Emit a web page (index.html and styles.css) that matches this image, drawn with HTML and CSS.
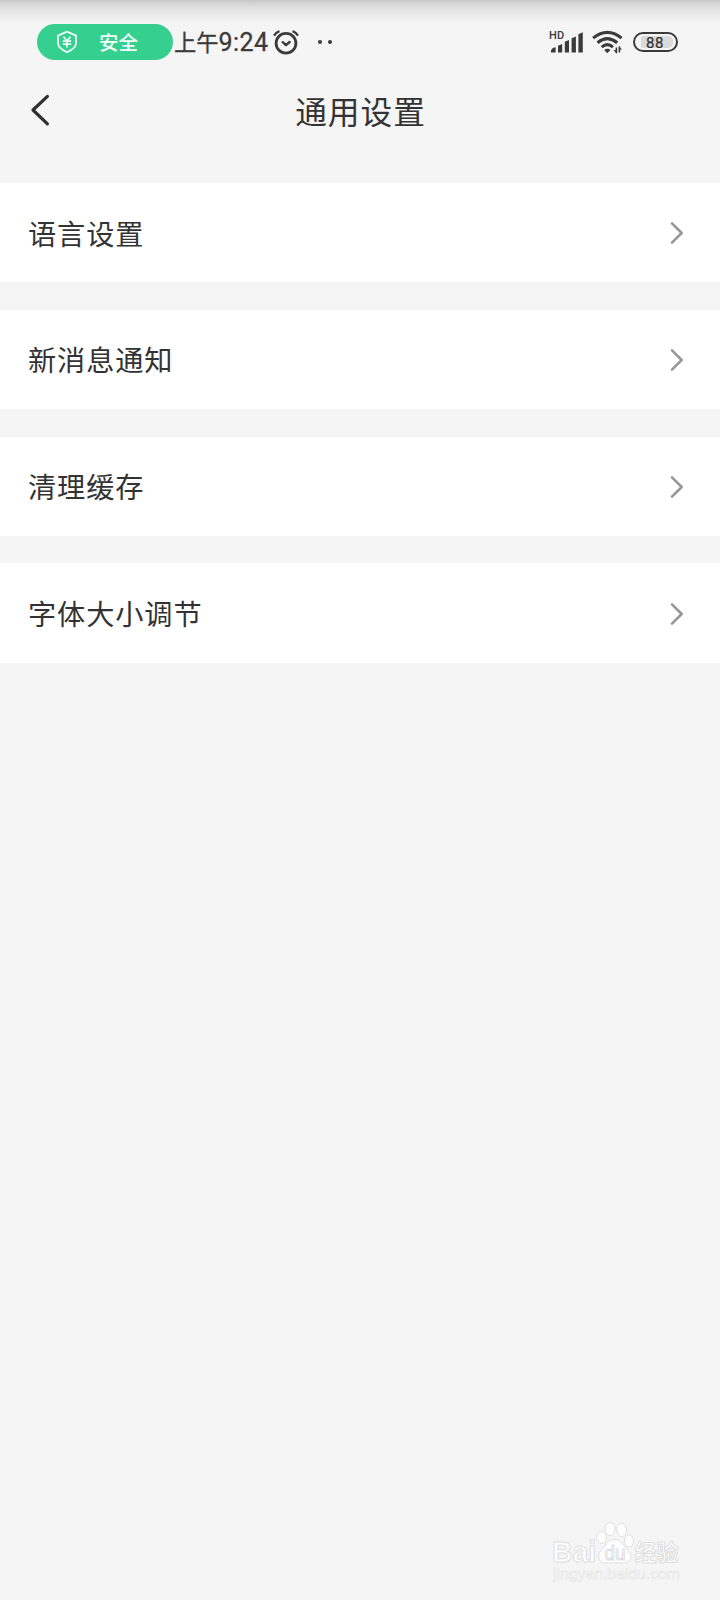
FILE: index.html
```html
<!DOCTYPE html>
<html lang="zh-CN">
<head>
<meta charset="utf-8">
<title>通用设置</title>
<link rel="stylesheet" href="styles.css">
</head>
<body>
<div class="screen">
  <div class="status">
    <div class="pill">
      <svg class="shield" width="22" height="24" viewBox="0 0 22 24" fill="none" stroke="#effff7">
        <path d="M11 1.7 L20 5.6 V13.5 Q20 18 11 22.3 Q2 18 2 13.5 V5.6Z" stroke-width="1.8" stroke-linejoin="round"/>
        <path d="M7.5 6.8 L11 10.8 L14.5 6.8 M11 10.8 V17.5 M6.8 11.2 H15.2 M6.8 14.2 H15.2" stroke-width="1.7"/>
      </svg>
      <span class="pill-text">安全</span>
    </div>
    <span class="time"><span class="ampm">上午</span>9:24</span>
    <svg class="alarm" width="28" height="26" viewBox="0 0 28 26" fill="none" stroke="#3b3b3b" stroke-linecap="round">
      <circle cx="14" cy="14.3" r="9.9" stroke-width="2.8"/>
      <path d="M10.7 13.2 L14 16.2 L17.6 13" stroke-width="2.4" stroke-linejoin="round"/>
      <path d="M2 6.6 Q4 3.4 7.4 2.2 M20.6 2.2 Q24 3.4 26 6.6" stroke-width="2.3" stroke-linecap="butt"/>
    </svg>
    <span class="dots"><i></i><i></i></span>
    <div class="signal">
      <span class="hd">HD</span>
      <svg width="34" height="24" viewBox="0 0 34 24" fill="#3b3b3b">
        <path d="M.8 22.4 Q.8 17.5 5.6 17.2 V22.4Z"/>
        <path d="M8 22.4 V15.8 L12.2 14 V22.4Z"/>
        <path d="M14.8 22.4 V11.8 L19 10 V22.4Z"/>
        <path d="M21.6 22.4 V8.2 L25.9 6.4 V22.4Z"/>
        <path d="M28.4 22.4 V4.2 L32.8 2.2 V22.4Z"/>
      </svg>
    </div>
    <svg class="wifi" width="32" height="24" viewBox="0 0 32 24" fill="none" stroke="#3b3b3b" stroke-width="3.1">
      <path d="M1.1 8.1 Q15.3 -3.3 29.6 8.1"/>
      <path d="M5.5 12.7 Q15.3 4.5 25.2 12.7"/>
      <path d="M9.7 17.1 Q15.3 12.3 21 17.1"/>
      <path d="M12.2 20 Q15.3 17.4 18.5 20 L15.3 23.3Z" fill="#3b3b3b" stroke="none"/>
      <path d="M24.4 23.3 V17.4 M27.4 16.6 V22.5" stroke-width="1.6"/>
      <path d="M24.8 23.6 L21.4 20 H24.8Z M27 16.2 L30 19.6 H27Z" fill="#3b3b3b" stroke="none"/>
    </svg>
    <div class="battery"><span>88</span></div>
  </div>

  <header class="header">
    <svg class="back" width="22" height="34" viewBox="0 0 22 34" fill="none" stroke="#303030" stroke-width="3.2" stroke-linecap="round" stroke-linejoin="round">
      <path d="M17.4 3.4 L3 17 L17.4 30.8"/>
    </svg>
    <h1 class="title">通用设置</h1>
  </header>

  <main class="list">
    <div class="row"><span>语言设置</span><svg class="chev" width="14" height="24" viewBox="0 0 14 24"><path d="M2 2.3 L11.7 12 L2 21.7"/></svg></div>
    <div class="row"><span>新消息通知</span><svg class="chev" width="14" height="24" viewBox="0 0 14 24"><path d="M2 2.3 L11.7 12 L2 21.7"/></svg></div>
    <div class="row"><span>清理缓存</span><svg class="chev" width="14" height="24" viewBox="0 0 14 24"><path d="M2 2.3 L11.7 12 L2 21.7"/></svg></div>
    <div class="row"><span>字体大小调节</span><svg class="chev" width="14" height="24" viewBox="0 0 14 24"><path d="M2 2.3 L11.7 12 L2 21.7"/></svg></div>
  </main>

  <footer class="mark">
    <svg width="140" height="70" viewBox="550 1518 140 70" fill="#fdfdfd" stroke="#dfdfdf" stroke-width="1">
      <g class="mark-brand">
        <text x="552" y="1562" font-size="29" textLength="44" lengthAdjust="spacingAndGlyphs">Bai</text>
        <ellipse cx="601.5" cy="1537.5" rx="5" ry="6"/>
        <ellipse cx="610" cy="1529" rx="5" ry="6.6"/>
        <ellipse cx="621.7" cy="1530" rx="5" ry="6.6"/>
        <ellipse cx="629" cy="1541" rx="4.6" ry="6"/>
        <path d="M615 1539.5 C622 1539.5 623 1545 627 1549 C634 1556 631 1563.5 623 1563 H607 C598 1563.5 596 1556 602 1549.5 C607 1544 608 1539.5 615 1539.5Z"/>
        <text class="mark-du" x="604.5" y="1560" font-size="19.5" textLength="21" lengthAdjust="spacingAndGlyphs">du</text>
      </g>
      <text class="mark-cn" x="634.5" y="1560.5" font-size="22.5" textLength="44" lengthAdjust="spacingAndGlyphs">经验</text>
      <text class="mark-url" x="553" y="1579" font-size="15.5" textLength="127" lengthAdjust="spacingAndGlyphs">jingyan.baidu.com</text>
    </svg>
  </footer>
</div>
</body>
</html>
```
FILE: styles.css
```css
* { box-sizing: border-box; }
body { margin: 0; }
.screen {
  width: 720px;
  height: 1600px;
  display: flex;
  flex-direction: column;
  overflow: hidden;
  color: #333;
  font-family: "Noto Sans CJK SC", sans-serif;
  background: linear-gradient(#c6c6c6 0, #d3d3d3 3px, #e0e0e0 8px, #ebebeb 15px, #f5f5f5 23px) #f5f5f5;
}
.status {
  height: 84px;
  display: flex;
  align-items: center;
  padding: 0 42px 0 37px;
}
.pill {
  width: 136px;
  height: 36px;
  border-radius: 18px;
  background: #35d08f;
  display: flex;
  align-items: center;
  padding-left: 19px;
}
.pill-text {
  margin-left: 21px;
  color: #f2fff9;
  font-size: 19.5px;
  line-height: 36px;
  font-weight: 500;
}
.time {
  margin-left: 1px;
  width: 95px;
  padding-top: 1px;
  white-space: nowrap;
  color: #3b3b3b;
  font: 400 25px/36px Roboto, "Noto Sans CJK SC", sans-serif;
  letter-spacing: 0.4px;
  -webkit-text-stroke: 0.3px #3b3b3b;
}
.ampm { font-size: 22.3px; letter-spacing: 0; }
.alarm { margin-left: 3px; }
.dots { display: flex; gap: 6px; margin-left: 18px; }
.dots i { width: 4px; height: 4px; border-radius: 50%; background: #3b3b3b; }
.signal { position: relative; margin-left: auto; height: 24px; }
.signal svg { display: block; }
.hd {
  position: absolute;
  left: -1px;
  top: 0;
  font: 500 11px/12px Roboto, sans-serif;
  letter-spacing: 0.3px;
  color: #3b3b3b;
}
.wifi { margin-left: 8px; }
.battery {
  width: 45px;
  height: 20px;
  margin-left: 9px;
  border: 2px solid #3b3b3b;
  border-radius: 10px;
  padding: 2px 3px 2px 6px;
}
.battery span {
  display: block;
  height: 12px;
  padding-left: 5px;
  border-radius: 2px 5px 5px 2px;
  background: #dadada;
  font: 400 15px/14px Roboto, sans-serif;
  letter-spacing: 0.5px;
  color: #303030;
  -webkit-text-stroke: 0.2px #303030;
}
.header {
  height: 99px;
  display: grid;
  grid-template-columns: 60px 1fr 60px;
  padding-top: 9px;
}
.back { margin-left: 30px; }
.title {
  margin: -1px 0 0;
  padding-left: 1px;
  text-align: center;
  font-size: 31.7px;
  line-height: 36px;
  font-weight: 400;
  letter-spacing: 1px;
}
.list { display: grid; gap: 27.5px; grid-auto-rows: 99.3px; }
.row {
  display: flex;
  align-items: center;
  justify-content: space-between;
  padding: 0 36px 0 28px;
  background: #fff;
  font-size: 28.2px;
  line-height: 40px;
  letter-spacing: 0.9px;
}
.chev { margin-top: 1px; fill: none; stroke: #969696; stroke-width: 2.5; stroke-linecap: round; stroke-linejoin: round; }
.mark { margin-top: auto; margin-left: 550px; height: 82px; }
.mark svg { display: block; }
.mark-brand { font-family: "Liberation Sans", sans-serif; font-weight: 700; }
.mark-du { font-weight: 400; }
.mark-cn { font-weight: 700; }
.mark-url { font-family: "Liberation Sans", sans-serif; stroke: #e6e6e6; stroke-width: 0.7; }
```
